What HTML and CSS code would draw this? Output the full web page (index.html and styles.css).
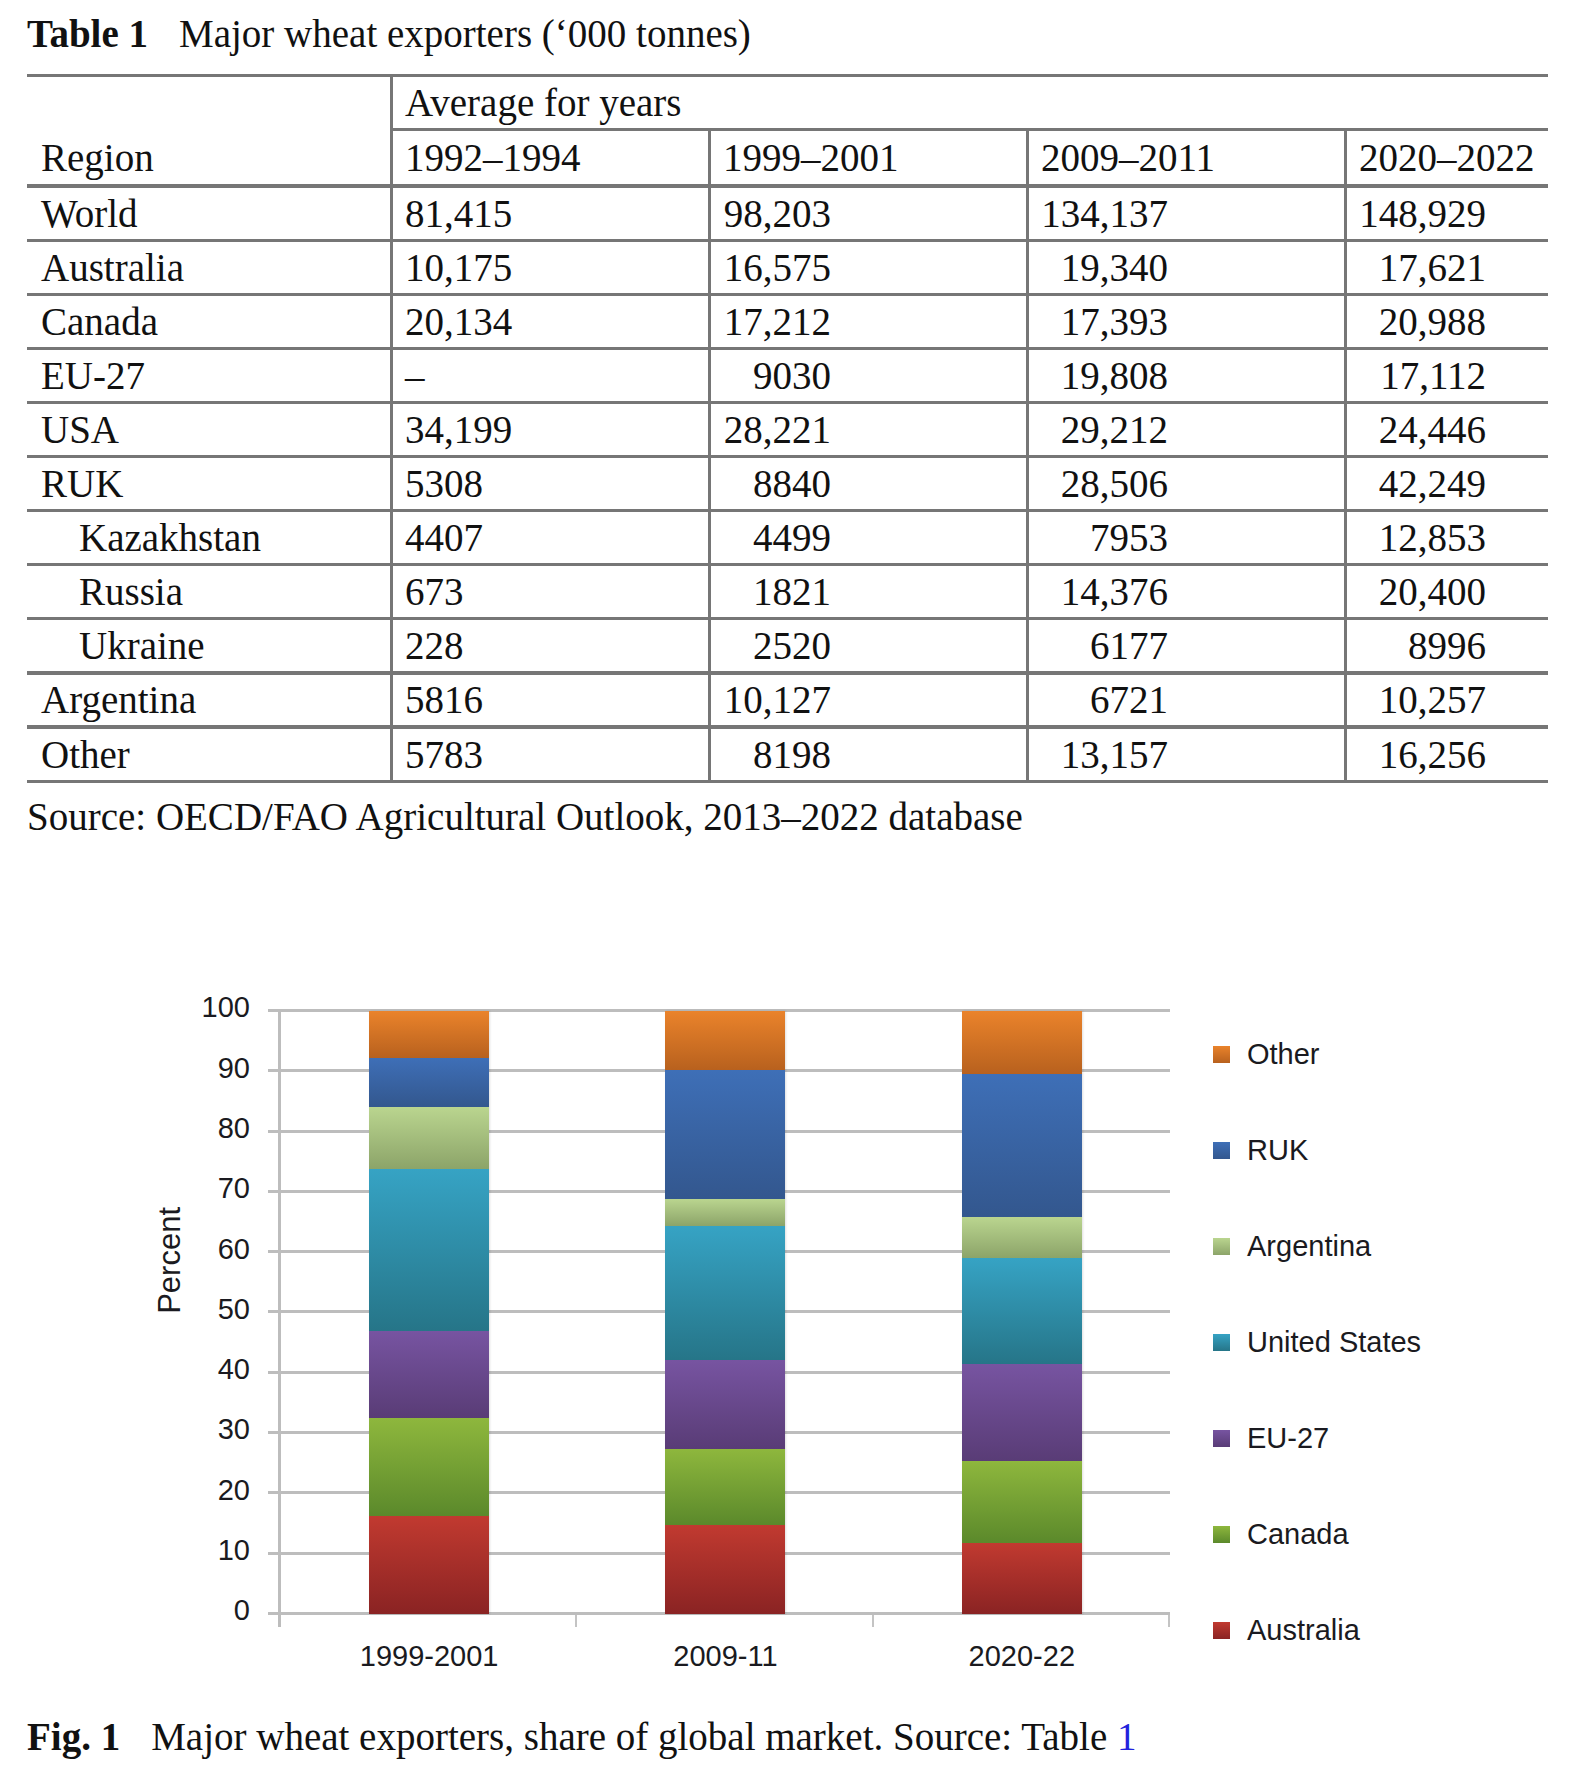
FILE: index.html
```html
<!DOCTYPE html>
<html lang="en">
<head>
<meta charset="utf-8">
<title>Major wheat exporters</title>
<link rel="stylesheet" href="styles.css">
</head>
<body>
<div class="page">
  <p class="caption title"><b>Table 1</b><span class="cap-text">Major wheat exporters (‘000 tonnes)</span></p>
  <table class="data">
    <colgroup><col class="c1"><col class="c2"><col class="c3"><col class="c4"><col class="c5"></colgroup>
    <thead>
      <tr><th rowspan="2" class="region-h">Region</th><th colspan="4" class="avg">Average for years</th></tr>
      <tr class="years"><th>1992–1994</th><th>1999–2001</th><th>2009–2011</th><th>2020–2022</th></tr>
    </thead>
    <tbody>
      <tr><td>World</td><td>81,415</td><td><span class="n3">98,203</span></td><td><span class="n4">134,137</span></td><td><span class="n5">148,929</span></td></tr>
      <tr><td>Australia</td><td>10,175</td><td><span class="n3">16,575</span></td><td><span class="n4">19,340</span></td><td><span class="n5">17,621</span></td></tr>
      <tr><td>Canada</td><td>20,134</td><td><span class="n3">17,212</span></td><td><span class="n4">17,393</span></td><td><span class="n5">20,988</span></td></tr>
      <tr><td>EU-27</td><td>–</td><td><span class="n3">9030</span></td><td><span class="n4">19,808</span></td><td><span class="n5">17,112</span></td></tr>
      <tr><td>USA</td><td>34,199</td><td><span class="n3">28,221</span></td><td><span class="n4">29,212</span></td><td><span class="n5">24,446</span></td></tr>
      <tr><td>RUK</td><td>5308</td><td><span class="n3">8840</span></td><td><span class="n4">28,506</span></td><td><span class="n5">42,249</span></td></tr>
      <tr class="sub"><td>Kazakhstan</td><td>4407</td><td><span class="n3">4499</span></td><td><span class="n4">7953</span></td><td><span class="n5">12,853</span></td></tr>
      <tr class="sub"><td>Russia</td><td>673</td><td><span class="n3">1821</span></td><td><span class="n4">14,376</span></td><td><span class="n5">20,400</span></td></tr>
      <tr class="sub thick"><td>Ukraine</td><td>228</td><td><span class="n3">2520</span></td><td><span class="n4">6177</span></td><td><span class="n5">8996</span></td></tr>
      <tr class="thick short"><td>Argentina</td><td>5816</td><td><span class="n3">10,127</span></td><td><span class="n4">6721</span></td><td><span class="n5">10,257</span></td></tr>
      <tr><td>Other</td><td>5783</td><td><span class="n3">8198</span></td><td><span class="n4">13,157</span></td><td><span class="n5">16,256</span></td></tr>
    </tbody>
  </table>
  <p class="source">Source: OECD/FAO Agricultural Outlook, 2013–2022 database</p>

  <div class="figure">
    <div class="ytitle">Percent</div>
    <div class="yaxis">
      <span>100</span><span>90</span><span>80</span><span>70</span><span>60</span><span>50</span><span>40</span><span>30</span><span>20</span><span>10</span><span>0</span>
    </div>
    <div class="plotcol">
      <div class="plot">
        <div class="grid">
          <div class="band"></div><div class="band"></div><div class="band"></div><div class="band"></div><div class="band"></div>
          <div class="band"></div><div class="band"></div><div class="band"></div><div class="band"></div><div class="band"></div>
        </div>
        <div class="bars">
          <div class="cat">
            <div class="bar">
              <div class="seg s-aus" style="height:16.1%"></div>
              <div class="seg s-can" style="height:16.3%"></div>
              <div class="seg s-eu" style="height:14.4%"></div>
              <div class="seg s-us" style="height:27.0%"></div>
              <div class="seg s-arg" style="height:10.2%"></div>
              <div class="seg s-ruk" style="height:8.2%"></div>
              <div class="seg s-oth" style="height:7.8%"></div>
            </div>
          </div>
          <div class="cat">
            <div class="bar">
              <div class="seg s-aus" style="height:14.7%"></div>
              <div class="seg s-can" style="height:12.5%"></div>
              <div class="seg s-eu" style="height:14.9%"></div>
              <div class="seg s-us" style="height:22.1%"></div>
              <div class="seg s-arg" style="height:4.6%"></div>
              <div class="seg s-ruk" style="height:21.4%"></div>
              <div class="seg s-oth" style="height:9.8%"></div>
            </div>
          </div>
          <div class="cat">
            <div class="bar">
              <div class="seg s-aus" style="height:11.7%"></div>
              <div class="seg s-can" style="height:13.6%"></div>
              <div class="seg s-eu" style="height:16.0%"></div>
              <div class="seg s-us" style="height:17.7%"></div>
              <div class="seg s-arg" style="height:6.7%"></div>
              <div class="seg s-ruk" style="height:23.7%"></div>
              <div class="seg s-oth" style="height:10.6%"></div>
            </div>
          </div>
        </div>
      </div>
      <div class="ticks"><span></span><span></span><span></span></div>
      <div class="xlabels"><span>1999-2001</span><span>2009-11</span><span>2020-22</span></div>
    </div>
    <ul class="legend">
      <li><span class="sw s-oth"></span>Other</li>
      <li><span class="sw s-ruk"></span>RUK</li>
      <li><span class="sw s-arg"></span>Argentina</li>
      <li><span class="sw s-us"></span>United States</li>
      <li><span class="sw s-eu"></span>EU-27</li>
      <li><span class="sw s-can"></span>Canada</li>
      <li><span class="sw s-aus"></span>Australia</li>
    </ul>
  </div>
  <p class="caption fig"><b>Fig. 1</b><span class="cap-text">Major wheat exporters, share of global market. Source: Table <span class="ref">1</span></span></p>
</div>
</body>
</html>
```

FILE: styles.css
```css
html, body {
  margin: 0;
  padding: 0;
  background: #ffffff;
}

.page {
  padding: 11px 32px 0 27px;
  font-family: "Liberation Serif", "Times New Roman", serif;
  font-size: 39px;
  color: #111111;
}

.caption {
  margin: 0;
  line-height: 45px;
  white-space: nowrap;
}

.caption b {
  font-weight: bold;
}

.cap-text {
  margin-left: 31px;
}

/* ---------- table ---------- */
.data {
  margin-top: 18px;
  width: 1521px;
  table-layout: fixed;
  border-collapse: separate;
  border-spacing: 0;
  border-top: 3px solid #767676;
}

.c1 { width: 363px; }
.c2 { width: 318px; }
.c3 { width: 318px; }
.c4 { width: 318px; }
.c5 { width: 204px; }

.data th,
.data td {
  padding: 0 0 0 12px;
  border-bottom: 3px solid #767676;
  line-height: 51px;
  font-weight: normal;
  text-align: left;
  white-space: nowrap;
  vertical-align: middle;
}

.data th:first-child,
.data tbody td:first-child {
  padding-left: 14px;
}

.data .years th:first-child {
  padding-left: 12px;
}

.data td + td,
.data .avg,
.data .years th {
  border-left: 3px solid #767676;
}

.data .region-h {
  vertical-align: bottom;
  line-height: 53px;
  border-bottom-width: 4px;
}

.data .years th {
  line-height: 53px;
  border-bottom-width: 4px;
}

.data .sub td:first-child {
  padding-left: 52px;
}

.data .thick td {
  border-bottom-width: 4px;
}

.data .short td {
  line-height: 50px;
}

.n3,
.n4,
.n5 {
  display: inline-block;
  text-align: right;
}

.n3 { width: 108px; }
.n4 { width: 127px; }
.n5 { width: 127px; }

.source {
  margin: 11px 0 0;
  line-height: 45px;
}

/* ---------- figure ---------- */
.figure {
  display: flex;
  align-items: flex-start;
  margin: 170px 0 0 125px;
  font-family: "Liberation Sans", Arial, sans-serif;
  font-size: 29px;
  color: #1a1a20;
}

.ytitle {
  writing-mode: vertical-rl;
  transform: rotate(180deg);
  width: 36px;
  line-height: 36px;
  font-size: 31px;
  margin-top: 198px;
}

.yaxis {
  display: flex;
  flex-direction: column;
  width: 62px;
  margin-top: -31.65px;
  text-align: right;
}

.yaxis span {
  display: block;
  height: 60.3px;
  line-height: 60.3px;
}

.plotcol {
  margin-left: 18px;
  width: 902px;
}

.plot {
  position: relative;
  width: 902px;
}

.grid {
  display: flex;
  flex-direction: column;
  border-bottom: 3px solid #bdbdbd;
}

.band {
  box-sizing: border-box;
  height: 60.3px;
  border-top: 3px solid #bdbdbd;
}

.bars {
  position: absolute;
  left: 10px;
  top: 1.5px;
  width: 889px;
  height: 603px;
  border-left: 3px solid #bdbdbd;
  display: flex;
}

.cat {
  flex: 1;
  display: flex;
  justify-content: center;
}

.bar {
  width: 120px;
  height: 100%;
  display: flex;
  flex-direction: column-reverse;
  box-shadow: 1px 0 2px rgba(0, 0, 0, 0.12);
}

.seg {
  flex: none;
}

.s-oth { background: linear-gradient(to bottom, #ea832b, #b8611e); }
.s-ruk { background: linear-gradient(to bottom, #3e6fb7, #33578e); }
.s-arg { background: linear-gradient(to bottom, #bad58f, #8ca469); }
.s-us  { background: linear-gradient(to bottom, #36a3c4, #267588); }
.s-eu  { background: linear-gradient(to bottom, #7754a1, #593c76); }
.s-can { background: linear-gradient(to bottom, #8eb73d, #5b892b); }
.s-aus { background: linear-gradient(to bottom, #c13a30, #8a2323); }

.ticks {
  display: flex;
  margin-left: 10px;
  width: 892px;
  height: 12px;
  border-left: 3px solid #bdbdbd;
  box-sizing: border-box;
}

.ticks span {
  flex: 1;
  border-right: 2px solid #c4c4c4;
}

.xlabels {
  display: flex;
  margin: 11.5px 0 0 13px;
  width: 889px;
  line-height: 36px;
}

.xlabels span {
  flex: 1;
  text-align: center;
}

.legend {
  list-style: none;
  margin: -2.5px 0 0 43px;
  padding: 0;
}

.legend li {
  display: flex;
  align-items: center;
  height: 96px;
  white-space: nowrap;
}

.sw {
  display: inline-block;
  width: 17px;
  height: 17px;
  margin-right: 17px;
  flex: none;
}

.fig {
  margin-top: 35px;
}

.ref {
  color: #2222dd;
}
```
